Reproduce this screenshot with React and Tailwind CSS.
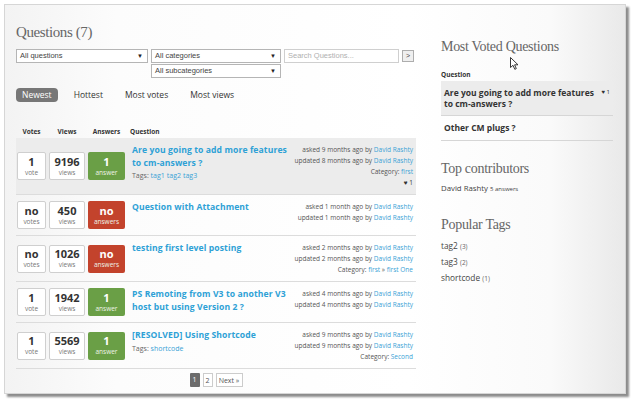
import React from "react";

const questions = [
  {
    votes: "1", voteLabel: "vote", views: "9196", answers: "1", answerLabel: "answer",
    title: ["Are you going to add more features", "to cm-answers ?"],
    tags: ["tag1", "tag2", "tag3"],
    asked: "9 months", updated: "8 months", category: ["first"], likes: true, highlight: true,
  },
  {
    votes: "no", voteLabel: "votes", views: "450", answers: "no", answerLabel: "answers",
    title: ["Question with Attachment"], asked: "1 month", updated: "1 month",
  },
  {
    votes: "no", voteLabel: "votes", views: "1026", answers: "no", answerLabel: "answers",
    title: ["testing first level posting"], asked: "2 months", updated: "2 months",
    category: ["first", "first One"],
  },
  {
    votes: "1", voteLabel: "vote", views: "1942", answers: "1", answerLabel: "answer",
    title: ["PS Remoting from V3 to another V3", "host but using Version 2 ?"],
    asked: "4 months", updated: "4 months",
  },
  {
    votes: "1", voteLabel: "vote", views: "5569", answers: "1", answerLabel: "answer",
    title: ["[RESOLVED] Using Shortcode"], tags: ["shortcode"],
    asked: "9 months", updated: "9 months", category: ["Second"],
  },
];

const Select = ({ label, w }) => (
  <div className={`${w} h-[14px] border border-[#b5b5b5] bg-white flex items-center justify-between pl-[3px] pr-[4px] font-['Liberation_Sans'] text-[7.5px] text-[#444]`}>
    <span>{label}</span>
    <span className="text-[6px] text-[#222]">▼</span>
  </div>
);

const Row = ({ q }) => {
  const answered = q.answers !== "no";
  return (
    <div className={`flex items-start py-[6px] pl-[1px] pr-[3px] border-b border-[#dcdcdc] ${q.highlight ? "bg-[#ececec]" : ""}`}>
      <div className="flex gap-[3px] self-center">
        <div className="w-[29px] h-[28px] border border-[#cfcfcf] bg-white rounded-[2px] flex flex-col items-center justify-center">
          <span className="text-[11px] font-bold leading-[12px] text-[#333]">{q.votes}</span>
          <span className="text-[6.5px] leading-[9px] text-[#777]">{q.voteLabel}</span>
        </div>
        <div className="w-[36px] h-[28px] border border-[#cfcfcf] bg-white rounded-[2px] flex flex-col items-center justify-center">
          <span className="text-[11px] font-bold leading-[12px] text-[#333]">{q.views}</span>
          <span className="text-[6.5px] leading-[9px] text-[#777]">views</span>
        </div>
        <div className={`w-[37px] h-[28px] rounded-[2px] flex flex-col items-center justify-center ${answered ? "bg-[#6a9f46]" : "bg-[#c3432c]"}`}>
          <span className="text-[11px] font-bold leading-[12px] text-white">{q.answers}</span>
          <span className="text-[6.5px] leading-[9px] text-[#eef3e8]">{q.answerLabel}</span>
        </div>
      </div>
      <div className="ml-[7px] flex-1">
        <div className="text-[8.6px] font-bold leading-[12.5px] text-[#2ea1d6] tracking-[0.1px]">
          {q.title.map((t, i) => (
            <div key={i}>{t}</div>
          ))}
        </div>
        {q.tags && (
          <div className="mt-[2px] text-[7px] leading-[10px] text-[#666]">
            Tags:{" "}
            {q.tags.map((t) => (
              <span key={t} className="text-[#3aa2d6] mr-[2px]">{t}</span>
            ))}
          </div>
        )}
      </div>
      <div className="text-right text-[6.5px] leading-[11px] text-[#555]">
        <div>asked {q.asked} ago by <span className="text-[#3aa2d6]">David Rashty</span></div>
        <div>updated {q.updated} ago by <span className="text-[#3aa2d6]">David Rashty</span></div>
        {q.category && (
          <div>
            Category:{" "}
            <span className="text-[#3aa2d6]">{q.category[0]}</span>
            {q.category[1] && (
              <>
                {" "}» <span className="text-[#3aa2d6]">{q.category[1]}</span>
              </>
            )}
          </div>
        )}
        {q.likes && <div className="text-[#333]">♥ 1</div>}
      </div>
    </div>
  );
};

export default function App() {
  return (
    <div className="w-[634px] h-[402px] bg-white pt-[4px] pl-[4px] font-['Open_Sans',sans-serif] overflow-hidden">
      <div className="relative w-[622px] h-[390px] border border-[#d6d6d6] shadow-[3px_3px_2px_rgba(0,0,0,0.45)] bg-[linear-gradient(90deg,#f3f3f3_0%,#fcfcfc_18%,#ffffff_65%,#fafafa_88%,#e9e9e9_100%)] flex pl-[11px] pt-[17px]">
        {/* main column */}
        <div className="w-[400px] flex flex-col">
          <h1 className="h-[20px] leading-[20px] text-[15px] tracking-[-0.4px] text-[#666] font-['Liberation_Serif',serif]">
            Questions (7)
          </h1>
          <div className="mt-[7px] flex items-start">
            <Select label="All questions" w="w-[132px]" />
            <div className="ml-[3px] flex flex-col gap-[1px]">
              <Select label="All categories" w="w-[130px]" />
              <Select label="All subcategories" w="w-[130px]" />
            </div>
            <div className="ml-[3px] w-[115px] h-[14px] border border-[#cfcfcf] bg-white pl-[3px] flex items-center font-['Liberation_Sans'] text-[7.5px] text-[#b0b0b0]">
              Search Questions...
            </div>
            <div className="ml-[3px] mt-[1px] w-[12px] h-[12px] border border-[#adadad] bg-[#efefef] flex items-center justify-center font-['Liberation_Sans'] text-[7px] text-[#444]">
              &gt;
            </div>
          </div>
          <div className="mt-[10px] flex gap-[10px] text-[8.5px] text-[#333] h-[14px]">
            <span className="px-[6px] h-[14px] leading-[14px] rounded-[4px] bg-[#777] text-white">Newest</span>
            <span className="px-[6px] leading-[14px]">Hottest</span>
            <span className="px-[6px] leading-[14px]">Most votes</span>
            <span className="px-[6px] leading-[14px]">Most views</span>
          </div>
          <div className="mt-[23px] h-[13px] flex items-center text-[6.5px] font-bold text-[#333] pl-[1px]">
            <span className="w-[29px] text-center">Votes</span>
            <span className="ml-[3px] w-[36px] text-center">Views</span>
            <span className="ml-[3px] w-[37px] text-center">Answers</span>
            <span className="ml-[5px]">Question</span>
          </div>
          <div className="flex flex-col">
            {questions.map((q, i) => (
              <Row key={i} q={q} />
            ))}
          </div>
          <div className="mt-[4px] flex justify-center gap-[3px] text-[7px] leading-[13px]">
            <span className="w-[10px] h-[14px] rounded-[1px] bg-[#6c6c6c] text-white text-center leading-[14px]">1</span>
            <span className="w-[10px] h-[14px] border border-[#ccc] bg-white text-[#555] text-center">2</span>
            <span className="w-[27px] h-[14px] border border-[#ccc] bg-white text-[#555] text-center">Next »</span>
          </div>
        </div>

        {/* sidebar */}
        <div className="ml-[25px] w-[172px] flex flex-col text-[#333]">
          <h2 className="mt-[15px] h-[20px] leading-[20px] text-[14px] tracking-[-0.3px] text-[#666] font-['Liberation_Serif',serif]">
            Most Voted Questions
          </h2>
          <div className="mt-[13px] h-[10px] leading-[10px] text-[6.5px] font-bold">Question</div>
          <div className="mt-[1px] bg-[#ececec] border-b border-[#d6d6d6] px-[3px] py-[6px] flex justify-between">
            <div className="text-[8.5px] font-bold leading-[11px] text-[#333]">
              <div>Are you going to add more features</div>
              <div>to cm-answers ?</div>
            </div>
            <span className="text-[6px] leading-[11px] text-[#333] whitespace-nowrap">♥ 1</span>
          </div>
          <div className="h-[25px] border-b border-[#d6d6d6] px-[3px] flex items-center text-[8.5px] font-bold">
            Other CM plugs ?
          </div>
          <h2 className="mt-[18px] h-[20px] leading-[20px] text-[14px] tracking-[-0.3px] text-[#666] font-['Liberation_Serif',serif]">
            Top contributors
          </h2>
          <div className="mt-[4px] leading-[10px] text-[7.8px] text-[#444]">
            David Rashty <span className="text-[6px]">5 answers</span>
          </div>
          <h2 className="mt-[21px] h-[20px] leading-[20px] text-[14px] tracking-[-0.3px] text-[#666] font-['Liberation_Serif',serif]">
            Popular Tags
          </h2>
          <div className="mt-[3px] flex flex-col text-[8.3px] leading-[15px] text-[#444]">
            <div>tag2 <span className="text-[6.5px] text-[#666]">(3)</span></div>
            <div>tag3 <span className="text-[6.5px] text-[#666]">(2)</span></div>
            <div>shortcode <span className="text-[6.5px] text-[#666]">(1)</span></div>
          </div>
        </div>

        {/* mouse pointer */}
        <svg className="absolute left-[505px] top-[52px]" width="9" height="13" viewBox="0 0 9 13">
          <path d="M0.5 0.5 L0.5 10.5 L3 8.3 L4.8 12.3 L6.3 11.6 L4.6 7.8 L8 7.8 Z" fill="white" stroke="#222" strokeWidth="0.9" strokeLinejoin="round" />
        </svg>
      </div>
    </div>
  );
}
